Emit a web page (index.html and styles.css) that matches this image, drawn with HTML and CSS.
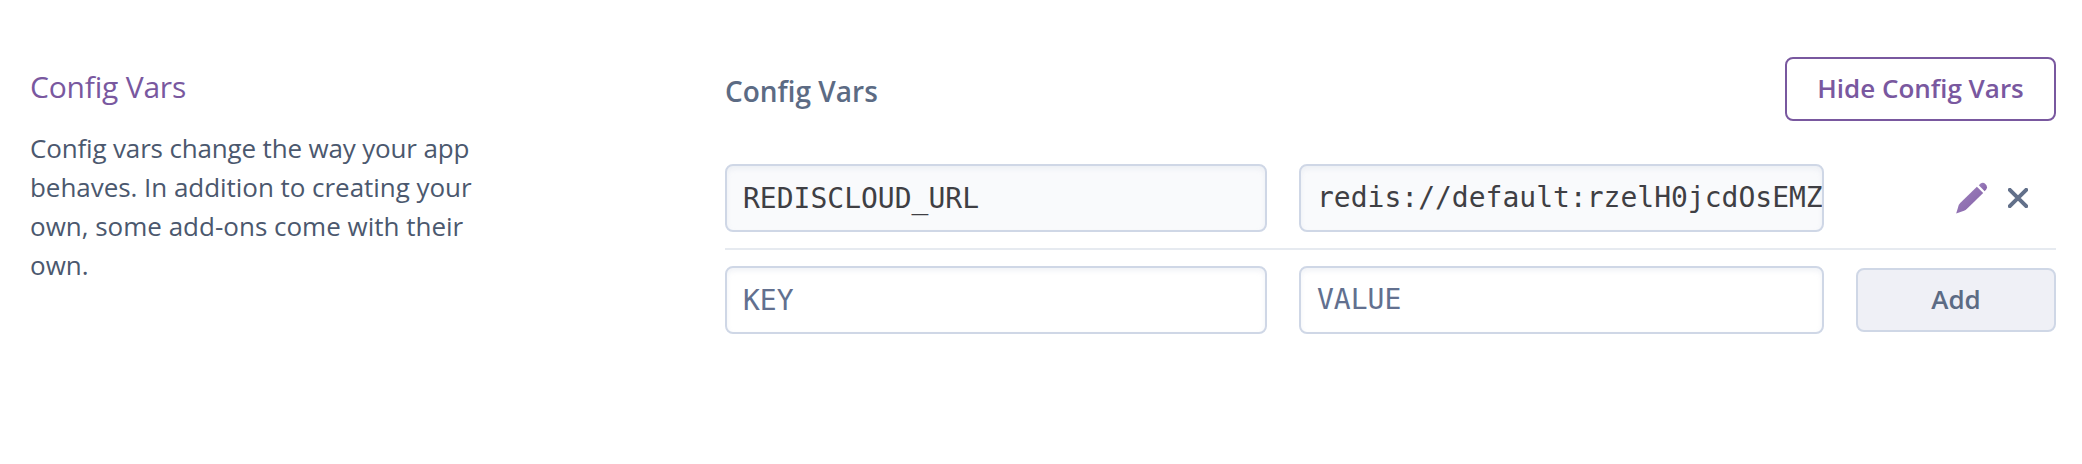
FILE: index.html
```html
<!DOCTYPE html>
<html lang="en">
<head>
<meta charset="utf-8">
<title>Config Vars</title>
<link rel="stylesheet" href="styles.css">
</head>
<body>
<main class="settings">
  <aside class="intro">
    <h2 class="intro-title">Config Vars</h2>
    <p class="intro-text"><span class="tight">Config vars change the way your app</span><br><span class="snug">behaves. In addition to creating your</span><br>own, some add-ons come with their<br>own.</p>
  </aside>
  <section class="panel">
    <header class="panel-head">
      <h3 class="panel-title">Config Vars</h3>
      <button class="btn btn-hide">Hide Config Vars</button>
    </header>
    <div class="row row-existing">
      <div class="field filled key">REDISCLOUD_URL</div>
      <div class="field filled">redis://default:rzelH0jcdOsEMZ</div>
      <div class="actions">
        <svg class="pencil" width="32" height="32" viewBox="0 0 32 32">
          <defs><linearGradient id="ink" x1="0" y1="0" x2="1" y2="1"><stop offset="0" stop-color="#9d83bd"/><stop offset="1" stop-color="#8560a8"/></linearGradient></defs>
          <path fill="url(#ink)" d="M0.200 31.500 2.600 23.500Q3.100 22 4.200 20.900L20.900 4.700 27.200 11 11 26.800Q9.600 28.100 8 28.800Z"/>
          <path fill="url(#ink)" d="M22.800 3.300 24.600 1.600Q27-.200 29.400 2 32 4.500 30.300 7.300L28.700 9.200Z"/>
        </svg>
        <svg class="cross" width="20" height="20" viewBox="0 0 20 20"><path d="M1.800 1.800 18.200 18.200M18.200 1.800 1.800 18.200" fill="none" stroke="#62708a" stroke-width="4" stroke-linecap="round"/></svg>
      </div>
    </div>
    <div class="row row-new">
      <div class="field key">KEY</div>
      <div class="field">VALUE</div>
      <button class="btn btn-add">Add</button>
    </div>
  </section>
</main>
</body>
</html>
```
FILE: styles.css
```css
* { box-sizing: border-box; }
body { margin: 0; background: #fff; font-family: "Open Sans", sans-serif; }
h2, h3, p { margin: 0; }
.settings { display: flex; width: 2082px; height: 464px; padding: 57px 26px 0 30px; }
.intro { width: 695px; padding-top: 9px; }
.intro-title { font-size: 30px; line-height: 41px; font-weight: 400; color: #79589f; letter-spacing: -0.2px; }
.intro-text { margin-top: 22px; font-size: 26px; line-height: 39px; color: #4b586e; white-space: nowrap; }
.tight { letter-spacing: -0.16px; }
.snug { letter-spacing: -0.04px; }
.panel { width: 1331px; }
.panel-head { display: flex; justify-content: space-between; height: 107px; }
.panel-title { padding-top: 14px; font-size: 28px; line-height: 40px; font-weight: 600; color: #5c6b84; }
.btn { display: flex; align-items: center; justify-content: center; height: 64px; padding: 0 0 2px; border-radius: 8px; font: 600 26px/36px "Open Sans", sans-serif; white-space: nowrap; }
.btn-hide { width: 271px; border: 2px solid #79589f; background: #fff; color: #79589f; }
.row { display: grid; grid-template-columns: 542px 525px 200px; justify-content: space-between; align-items: center; }
.row-existing { height: 86px; padding-bottom: 16px; border-bottom: 2px solid #e6eaf0; }
.row-new { padding-top: 16px; }
.field { display: flex; align-items: center; height: 68px; padding-left: 16px; border: 2px solid #cfd7e6; border-radius: 8px; background: #fff; box-shadow: inset 0 3px 5px rgba(207, 215, 230, .3); overflow: hidden; white-space: nowrap; font: 28px/36px "DejaVu Sans Mono", monospace; color: #62708f; }
.filled { background: #f9fafc; color: #3f3f44; }
.key { padding-top: 2px; }
.actions { display: flex; align-items: center; gap: 20px; padding-left: 100px; }
.btn-add { width: 200px; border: 2px solid #cfd7e6; background: #eff0f6; color: #5c6b84; }
```
